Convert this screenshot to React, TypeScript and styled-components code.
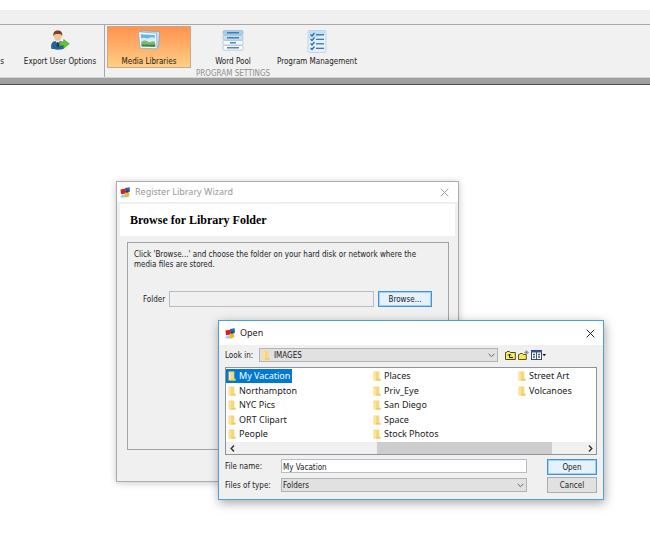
import React from 'react';
import styled, { createGlobalStyle, css } from 'styled-components';

const uiFont = '"DejaVu Sans Condensed", "DejaVu Sans", sans-serif';
const titleFont = '"Noto Sans", "Open Sans", sans-serif';

const GlobalStyle = createGlobalStyle`
  * { box-sizing: border-box; }
  body { margin: 0; background: #fff; }
  button, input, select { font: inherit; color: inherit; margin: 0; }
`;

const Page = styled.div`
  display: flex;
  flex-direction: column;
  min-height: 100vh;
  padding-top: 10px;
  overflow: hidden;
  font: 8px/10px ${uiFont};
  color: #1a1a1a;
`;

const TabStrip = styled.div`
  height: 15px;
  background: #f0f0f0;
  border-bottom: 1px solid #a8a8a8;
`;

const Ribbon = styled.nav`
  display: flex;
  height: 53px;
  background: #f1f1f1;
  border-bottom: 1px solid #d4d4d4;
`;

const Group = styled.div<{ $divided?: boolean }>`
  display: flex;
  flex-direction: column;
  align-items: center;
  padding: 1px 2px 0;
  ${p => p.$divided && css`
    padding-left: 0;
    border-right: 1px solid #a9a9a9;
  `}
`;

const GroupTools = styled.div<{ $gap?: number }>`
  display: flex;
  gap: ${p => p.$gap ?? 0}px;
`;

const GroupTitle = styled.div`
  color: #8f8f8f;
  line-height: 12px;
`;

const Tool = styled.button<{ $active?: boolean; $width: number }>`
  display: flex;
  flex-direction: column;
  align-items: center;
  justify-content: space-between;
  width: ${p => p.$width}px;
  height: 42px;
  padding: 3px 0 0;
  border: 1px solid ${p => (p.$active ? '#c9a78b' : 'transparent')};
  background: ${p => (p.$active ? 'linear-gradient(#ff934f, #ffce85)' : 'none')};
  white-space: nowrap;
`;

const RibbonEdge = styled.div`
  height: 7px;
  background: #a0a0a0;
  border-bottom: 1px solid #4c4c4c;
`;

const Desktop = styled.main`
  position: relative;
  flex: 1;
`;

const Window = styled.section<{ $x: number; $y: number; $width: number; $height: number; $active?: boolean }>`
  position: absolute;
  left: ${p => p.$x}px;
  top: ${p => p.$y}px;
  width: ${p => p.$width}px;
  min-height: ${p => p.$height}px;
  display: flex;
  flex-direction: column;
  background: #f0f0f0;
  border: 1px solid ${p => (p.$active ? '#4a9fdc' : '#ababab')};
  box-shadow: ${p => (p.$active ? '1px 3px 10px rgba(0,0,0,.35)' : '0 1px 7px rgba(0,0,0,.22)')};
`;

const TitleBar = styled.header<{ $active?: boolean }>`
  display: flex;
  align-items: center;
  gap: 4px;
  height: ${p => (p.$active ? 24 : 20)}px;
  padding: ${p => (p.$active ? '0 8px 0 6px' : '0 9px 0 3px')};
  background: #fff;
  color: ${p => (p.$active ? '#222' : '#999')};
  font: 9px/12px ${titleFont};
`;

const WindowTitle = styled.span`
  flex: 1;
`;

const CloseButton = styled.button`
  display: flex;
  padding: 0;
  border: 0;
  background: none;
`;

const Banner = styled.h1`
  margin: 2px 3px 6px;
  padding: 0 10px;
  background: #fff;
  color: #000;
  font: bold 12px/32px "Liberation Serif", serif;
`;

const Panel = styled.div`
  flex: 1;
  margin: 0 9px 31px 10px;
  padding: 7px 6px 0;
  border: 1px solid #a3a3a3;
`;

const Message = styled.p`
  margin: 0 16px 21px 0;
`;

const FolderRow = styled.div`
  display: flex;
  align-items: center;
  gap: 4px;
  padding: 0 10px 0 9px;
`;

const TextBox = styled.input<{ $muted?: boolean }>`
  flex: 1;
  min-width: 0;
  height: ${p => (p.$muted ? 16 : 14)}px;
  padding: 2px 1px 0;
  border: 1px solid #b9bcc2;
  background: ${p => (p.$muted ? '#f0f0f0' : '#fff')};
`;

const PushButton = styled.button<{ $primary?: boolean; $width: number }>`
  width: ${p => p.$width}px;
  height: 16px;
  padding: 2px 0 0;
  line-height: 12px;
  border: 1px solid ${p => (p.$primary ? '#3c95dc' : '#adadad')};
  background: ${p => (p.$primary ? '#e5f1fb' : '#e1e1e1')};
  ${p => p.$primary && css`box-shadow: inset 0 0 0 1px #a5d0f3;`}
`;

const LookRow = styled.div`
  display: flex;
  align-items: center;
  padding: 3px 0 5px 6px;
`;

const Label = styled.label<{ $width?: number }>`
  ${p => p.$width && css`width: ${p.$width}px;`}
  padding-top: 2px;
  white-space: nowrap;
`;

const SelectFrame = styled.div<{ $width?: number }>`
  position: relative;
  ${p => (p.$width ? css`width: ${p.$width}px;` : css`flex: 1;`)}
`;

const Select = styled.select<{ $indent?: boolean }>`
  display: block;
  width: 100%;
  height: 14px;
  padding: 2px 12px 0 ${p => (p.$indent ? 14 : 1)}px;
  appearance: none;
  border: 1px solid #b2b2b2;
  border-radius: 0;
  background: #e1e1e1;
`;

const SelectIcon = styled.span<{ $side: 'left' | 'right' }>`
  position: absolute;
  top: 0;
  bottom: 0;
  ${p => p.$side}: 3px;
  display: flex;
  align-items: center;
  pointer-events: none;
`;

const LookTools = styled.div`
  display: flex;
  align-items: center;
  gap: 2px;
  margin-left: 7px;
`;

const IconButton = styled.button`
  display: flex;
  padding: 0;
  border: 0;
  background: none;
`;

const FileBox = styled.div`
  margin: 0 6px;
  border: 1px solid #8d929b;
  background: #fff;
`;

const FileList = styled.ul`
  display: grid;
  grid-template-rows: repeat(5, 1fr);
  grid-auto-flow: column;
  grid-auto-columns: 145px;
  height: 74px;
  margin: 0;
  padding: 1px 0 0;
  overflow: hidden;
  list-style: none;
  font: 9px/14px ${titleFont};
`;

const FileItem = styled.button<{ $selected?: boolean }>`
  display: flex;
  align-items: center;
  gap: 3px;
  height: 14px;
  padding: 0 2px;
  border: 0;
  white-space: nowrap;
  background: ${p => (p.$selected ? '#0078d7' : 'none')};
  color: ${p => (p.$selected ? '#fff' : '#1a1a1a')};
`;

const ScrollBar = styled.div`
  display: flex;
  height: 12px;
  background: #f0f0f0;
`;

const ScrollArrow = styled.button`
  display: flex;
  align-items: center;
  justify-content: center;
  width: 12px;
  padding: 0;
  border: 0;
  background: none;
`;

const ScrollTrack = styled.div`
  display: flex;
  flex: 1;
  padding: 0 32px 0 139px;
`;

const ScrollThumb = styled.div`
  flex: 1;
  background: #cdcdcd;
`;

const Form = styled.div`
  display: flex;
  gap: 20px;
  padding: 4px 6px 6px;
`;

const Fields = styled.div`
  display: flex;
  flex: 1;
  flex-direction: column;
  gap: 5px;
`;

const Field = styled.div`
  display: flex;
  align-items: center;
`;

const Actions = styled.div`
  display: flex;
  flex-direction: column;
  gap: 2px;
`;

const AppLogo = () => (
  <svg width="11" height="11" viewBox="0 0 11 11" aria-hidden="true">
    <path d="M.3 9.200 3 7.500h5.500l-1.500 2.900H1.500z" fill="#8fd3ee" />
    <path d="M5 1 9.600.3l.4 4.500-4.600.5z" fill="#2a62b4" />
    <path d="M.4 2.600 5.100 1.700 5.900 6.400 1.100 7.200z" fill="#dc1f1b" />
    <path d="M4.700 5.800 9.200 5.200 9.300 9.400 5 9.900z" fill="#f5b81c" />
    <path d="M5.500 3.800 8.500 3.400 8.400 5.400 5.900 5.800z" fill="#1d3b74" />
  </svg>
);

const CloseIcon = ({ color }: { color: string }) => (
  <svg width="9" height="9" viewBox="0 0 9 9" aria-hidden="true">
    <path d="M.7.7l7.600 7.600M8.300.7.7 8.300" stroke={color} strokeWidth="1" fill="none" />
  </svg>
);

const Chevron = () => (
  <svg width="7" height="5" viewBox="0 0 7 5" aria-hidden="true">
    <path d="M.6.8 3.500 3.700 6.400.8" stroke="#666" fill="none" />
  </svg>
);

const FolderIcon = () => (
  <svg width="8" height="10" viewBox="0 0 8 10" aria-hidden="true">
    <path d="M.5.500h5.800v7h1.200v2H.5z" fill="#f8d67a" />
    <path d="M1 1l2 .7v7.600L1 8.800z" fill="#fde49c" />
    <path d="M3 8.300H7.500v1.200H3z" fill="#f0c452" />
  </svg>
);

const UserExportIcon = () => (
  <svg width="20" height="20" viewBox="0 0 20 20" aria-hidden="true">
    <path d="M1.200 18.500c-.4-5 .8-7 4.500-7.500h4c3.700.5 4.700 3 4.500 7.500-3 1.600-10 1.600-13 0z" fill="#27619f" />
    <path d="M5.500 11l2.200 3 2.300-3z" fill="#e8eef5" />
    <path d="M7.300 12h1l.7 4-1.200 1.500L6.700 16z" fill="#12325c" />
    <ellipse cx="7.800" cy="6.200" rx="3.800" ry="4.700" fill="#f2c398" />
    <path d="M3.500 6.500C2.800 2 4.800.4 7.800.4s5.200 1.800 4.400 6.100C11.500 3.600 10 4 8 4S4.300 3.800 3.500 6.500z" fill="#7c3f1b" />
    <path d="M9.500 12h4.200V9.500l5.600 4.300-5.600 4.200v-2.600H9.500z" fill="#62c531" stroke="#3f9a24" strokeWidth=".6" />
  </svg>
);

const PicturesIcon = () => (
  <svg width="24" height="20" viewBox="0 0 24 20" aria-hidden="true">
    <path d="M5 .8 22.500 1.800 21.500 17 4 15.500z" fill="#c9e2f4" stroke="#6ea4cc" strokeWidth=".7" />
    <path d="M1.500 1.800 19.500 3.200 20 18.800 3 18.200z" fill="#f4f9fd" stroke="#7ba7c9" strokeWidth=".7" />
    <path d="M3.700 4.200 17.800 5 18.200 16.800 4.700 16.200z" fill="#67b5e8" />
    <path d="M4 8.500c3-2 5 1 8-.5s4 0 6 0l.2 4H4.300z" fill="#d7eefa" />
    <path d="M4.400 12c3-2 5-2 8 1 2-2 4-2 5.700-1l.1 4.800L4.700 16.200z" fill="#7fb96a" />
    <path d="M4.600 14.500c4 0 9 .5 13.600 0v2.300L4.700 16.200z" fill="#3f8345" />
  </svg>
);

const WordPoolIcon = () => (
  <svg width="22" height="21" viewBox="0 0 22 21" aria-hidden="true">
    {[0.5, 5.5, 10.5, 15.5].map((y, i) => (
      <g key={y}>
        <rect x="1" y={y} width="20" height="4.600" rx="1.300" fill={['#9ed0f2', '#c4e2f7', '#f3f8fc', '#fbfcfd'][i]} stroke="#a9b7c4" strokeWidth=".7" />
        <path d={i === 2 ? `M8 ${y + 2.3}h6` : `M5 ${y + 2.3}h12`} stroke="#2268a8" strokeWidth="1.200" />
      </g>
    ))}
  </svg>
);

const ChecklistIcon = () => (
  <svg width="20" height="23" viewBox="0 0 20 23" aria-hidden="true">
    <rect x="1" y=".5" width="18" height="22" rx="1" fill="#e4f1fb" stroke="#b4cfe5" strokeWidth=".8" />
    <path d="M1.500 1h17v4l-17 4z" fill="#bfe0f7" />
    {[4.5, 9, 13.5, 18].map(y => (
      <g key={y} fill="none" stroke="#2a6cab">
        <path d={`M3.500 ${y}l1.500 1.500 2.500-3`} strokeWidth="1.300" />
        <path d={`M9 ${y + 0.3}h8`} strokeWidth="1.200" />
      </g>
    ))}
  </svg>
);

const UpFolderIcon = () => (
  <svg width="11" height="9" viewBox="0 0 11 9" aria-hidden="true">
    <path d="M.5 8.500v-7h1l.6-1h2.400l.8 1h5v7z" fill="#f5ef65" stroke="#4c4a20" />
    <path d="M4.500 3v3.500H8M3 4.500 4.500 3 6 4.500" fill="none" stroke="#111" />
  </svg>
);

const NewFolderIcon = () => (
  <svg width="11" height="10" viewBox="0 0 11 10" aria-hidden="true">
    <path d="M.5 9.500v-5h1l.6-1h2.400l.8 1h3v5z" fill="#f5e75b" stroke="#5b5420" />
    <path d="M8.500 0v5M6 2.500h5M6.800.8l3.400 3.400M10.200.8 6.800 4.200" stroke="#77776c" strokeWidth=".6" />
  </svg>
);

const ViewMenuIcon = () => (
  <svg width="15" height="10" viewBox="0 0 15 10" aria-hidden="true">
    <rect x=".5" y=".5" width="10" height="9" fill="#fff" stroke="#3d4654" />
    <path d="M0 1.500h11" stroke="#2d5598" strokeWidth="2" />
    <path d="M2 4.500h2M2 7h2M7 4.500h2M7 7h2" stroke="#2d5598" strokeWidth="1.500" />
    <path d="M5.500 2v7" stroke="#4c5764" strokeWidth="1" />
    <path d="M11.500 4h3.500L13.200 6.300z" fill="#111" />
  </svg>
);

const ArrowIcon = ({ back }: { back?: boolean }) => (
  <svg width="5" height="7" viewBox="0 0 5 7" aria-hidden="true">
    <path d={back ? 'M4 .6 1.200 3.500 4 6.400' : 'M1 .6 3.800 3.500 1 6.400'} stroke="#333" strokeWidth="1.400" fill="none" />
  </svg>
);

const folders = [
  'My Vacation', 'Northampton', 'NYC Pics', 'ORT Clipart', 'People',
  'Places', 'Priv_Eye', 'San Diego', 'Space', 'Stock Photos',
  'Street Art', 'Volcanoes',
];

export default function App() {
  return (
    <Page>
      <GlobalStyle />
      <TabStrip />
      <Ribbon>
        <Group $divided>
          <GroupTools $gap={14}>
            <Tool $width={4}><span /><span>s</span></Tool>
            <Tool $width={84}><UserExportIcon /><span>Export User Options</span></Tool>
          </GroupTools>
        </Group>
        <Group>
          <GroupTools>
            <Tool $width={84} $active><PicturesIcon /><span>Media Libraries</span></Tool>
            <Tool $width={84}><WordPoolIcon /><span>Word Pool</span></Tool>
            <Tool $width={84}><ChecklistIcon /><span>Program Management</span></Tool>
          </GroupTools>
          <GroupTitle>PROGRAM SETTINGS</GroupTitle>
        </Group>
      </Ribbon>
      <RibbonEdge />
      <Desktop>
        <Window $x={116} $y={96} $width={343} $height={301} role="dialog" aria-label="Register Library Wizard">
          <TitleBar>
            <AppLogo />
            <WindowTitle>Register Library Wizard</WindowTitle>
            <CloseButton aria-label="Close"><CloseIcon color="#999" /></CloseButton>
          </TitleBar>
          <Banner>Browse for Library Folder</Banner>
          <Panel>
            <Message>Click 'Browse...' and choose the folder on your hard disk or network where the media files are stored.</Message>
            <FolderRow>
              <Label htmlFor="folder">Folder</Label>
              <TextBox id="folder" $muted />
              <PushButton $primary $width={54}>Browse...</PushButton>
            </FolderRow>
          </Panel>
        </Window>
        <Window $x={218} $y={235} $width={386} $height={179} $active role="dialog" aria-label="Open">
          <TitleBar $active>
            <AppLogo />
            <WindowTitle>Open</WindowTitle>
            <CloseButton aria-label="Close"><CloseIcon color="#222" /></CloseButton>
          </TitleBar>
          <LookRow>
            <Label htmlFor="look" $width={34}>Look in:</Label>
            <SelectFrame $width={239}>
              <Select id="look" $indent><option>IMAGES</option></Select>
              <SelectIcon $side="left"><FolderIcon /></SelectIcon>
              <SelectIcon $side="right"><Chevron /></SelectIcon>
            </SelectFrame>
            <LookTools>
              <IconButton aria-label="Up one level"><UpFolderIcon /></IconButton>
              <IconButton aria-label="New folder"><NewFolderIcon /></IconButton>
              <IconButton aria-label="View menu"><ViewMenuIcon /></IconButton>
            </LookTools>
          </LookRow>
          <FileBox>
            <FileList>
              {folders.map((name, i) => (
                <li key={name}>
                  <FileItem $selected={i === 0}><FolderIcon />{name}</FileItem>
                </li>
              ))}
            </FileList>
            <ScrollBar>
              <ScrollArrow aria-label="Scroll left"><ArrowIcon back /></ScrollArrow>
              <ScrollTrack><ScrollThumb /></ScrollTrack>
              <ScrollArrow aria-label="Scroll right"><ArrowIcon /></ScrollArrow>
            </ScrollBar>
          </FileBox>
          <Form>
            <Fields>
              <Field>
                <Label htmlFor="name" $width={56}>File name:</Label>
                <TextBox id="name" defaultValue="My Vacation" />
              </Field>
              <Field>
                <Label htmlFor="type" $width={56}>Files of type:</Label>
                <SelectFrame>
                  <Select id="type"><option>Folders</option></Select>
                  <SelectIcon $side="right"><Chevron /></SelectIcon>
                </SelectFrame>
              </Field>
            </Fields>
            <Actions>
              <PushButton $primary $width={50}>Open</PushButton>
              <PushButton $width={50}>Cancel</PushButton>
            </Actions>
          </Form>
        </Window>
      </Desktop>
    </Page>
  );
}
